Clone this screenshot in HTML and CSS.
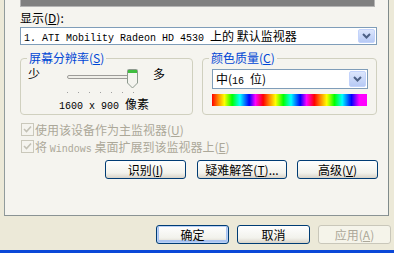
FILE: index.html
```html
<!DOCTYPE html>
<html>
<head>
<meta charset="utf-8">
<link rel="stylesheet" href="styles.css">
</head>
<body>
<div class="dialog">
  <div class="panel">
    <div class="preview"></div>
    <div class="label">显示(<u>D</u>):</div>
    <div class="select main-select">
      <span class="sel-text"><span class="mono">1. ATI Mobility Radeon HD 4530 </span>上的 默认监视器</span>
      <span class="dd"><svg width="9" height="6" viewBox="0 0 9 6"><path d="M1 1 L4.5 4.5 L8 1" fill="none" stroke="#4d6185" stroke-width="2"/></svg></span>
    </div>
    <div class="groups">
      <div class="group left-group">
        <span class="legend">屏幕分辨率(<u>S</u>)</span>
        <div class="slider-row">
          <span class="few">少</span>
          <div class="slider">
            <div class="track"></div>
            <div class="ticks"><i></i><i></i><i></i><i></i><i></i><i></i><i></i></div>
            <svg class="thumb" width="11" height="20" viewBox="0 0 11 20"><path d="M0.5 1.5 Q0.5 0.5 1.5 0.5 L9.5 0.5 Q10.5 0.5 10.5 1.5 L10.5 14 L5.5 19 L0.5 14 Z" fill="#f4f4ef" stroke="#8e9a8f"/><rect x="1" y="1" width="9" height="3" fill="#3fbd3f"/></svg>
          </div>
          <span class="many">多</span>
        </div>
        <div class="res"><span class="mono">1600 x 900 </span>像素</div>
      </div>
      <div class="group right-group">
        <span class="legend">颜色质量(<u>C</u>)</span>
        <div class="select color-select">
          <span class="sel-text">中(<span class="mono">16 </span>位)</span>
          <span class="dd"><svg width="9" height="6" viewBox="0 0 9 6"><path d="M1 1 L4.5 4.5 L8 1" fill="none" stroke="#4d6185" stroke-width="2"/></svg></span>
        </div>
        <div class="spectrum"></div>
      </div>
    </div>
    <div class="checks">
      <div class="check"><span class="box"><svg width="9" height="8" viewBox="0 0 9 8"><path d="M1 4 L3.5 6.5 L8 1.5" fill="none" stroke="#c3c1b5" stroke-width="1.6"/></svg></span><span>使用该设备作为主监视器(<u>U</u>)</span></div>
      <div class="check"><span class="box"><svg width="9" height="8" viewBox="0 0 9 8"><path d="M1 4 L3.5 6.5 L8 1.5" fill="none" stroke="#c3c1b5" stroke-width="1.6"/></svg></span><span>将 <span class="mono">Windows</span> 桌面扩展到该监视器上(<u>E</u>)</span></div>
    </div>
    <div class="btn-row">
      <button class="btn b1">识别(<u>I</u>)</button>
      <button class="btn b2">疑难解答(<u>T</u>)...</button>
      <button class="btn b3">高级(<u>V</u>)</button>
    </div>
  </div>
  <div class="footer">
    <button class="btn fbtn default">确定</button>
    <button class="btn fbtn">取消</button>
    <button class="btn fbtn disabled">应用(<u>A</u>)</button>
  </div>
  <div class="frame-bottom"></div>
</div>
</body>
</html>
```
FILE: styles.css
```css
* { box-sizing: border-box; }
html, body {
  margin: 0;
  padding: 0;
  width: 394px;
  height: 253px;
  overflow: hidden;
  background: #ece9d8;
  font-family: "Noto Sans CJK SC", "Liberation Mono", sans-serif;
  font-size: 12px;
  color: #000;
}
u { text-decoration: underline; text-underline-offset: 1px; }
.mono { font-family: "Liberation Mono", monospace; font-size: 10px; }
.dialog { width: 394px; height: 253px; display: flex; flex-direction: column; }
.panel {
  margin-left: 4px;
  width: 385px;
  height: 216px;
  flex: none;
  background: #f5f4ef;
  border: 1px solid #919b9c;
  border-top: none;
  border-right-color: #7f8a8b;
  border-bottom-color: #8a9394;
  padding: 0 0 0 15px;
  display: flex;
  flex-direction: column;
}
.preview {
  width: 355px;
  height: 7px;
  flex: none;
  background: #808080;
  border: 1px solid #b4b4b4;
  border-top: none;
}
.label { margin-top: 2px; height: 17px; line-height: 17px; }
.select {
  display: flex;
  align-items: center;
  background: #fff;
  border: 1px solid #7f9db9;
  padding: 1px;
}
.main-select { width: 357px; height: 18px; margin-top: 1px; }
.sel-text { flex: 1; padding-left: 2px; height: 14px; line-height: 14px; white-space: nowrap; }
.dd {
  width: 17px;
  height: 100%;
  flex: none;
  background: linear-gradient(#dce6fc, #b7caf5);
  border: 1px solid #c3d3fb;
  border-radius: 2px;
  display: flex;
  align-items: center;
  justify-content: center;
}
.groups { display: flex; gap: 9px; margin-top: 13px; }
.group {
  position: relative;
  height: 57px;
  border: 1px solid #d0d0bf;
  border-radius: 4px;
}
.left-group { width: 173px; }
.right-group { width: 175px; padding-left: 9px; }
.legend {
  position: absolute;
  left: 6px;
  top: -7px;
  padding: 0 2px;
  background: #f5f4ef;
  color: #0046d5;
  line-height: 12px;
  white-space: nowrap;
}
.slider-row { display: flex; align-items: flex-start; margin-top: 8px; height: 24px; }
.few { width: 46px; padding-left: 7px; line-height: 14px; }
.many { padding-left: 5px; line-height: 14px; }
.slider { position: relative; width: 81px; height: 24px; }
.track {
  position: absolute; left: 0; top: 8px; width: 68px; height: 4px;
  border: 1px solid #9d9c99; border-radius: 2px; background: #f0efe9;
}
.thumb { position: absolute; left: 60px; top: 2px; }
.ticks { position: absolute; left: 0; top: 25px; display: flex; gap: 10px; }
.ticks i { width: 1px; height: 1px; background: #a0a0a0; display: block; }
.res { margin-top: 6px; margin-left: 38px; line-height: 14px; white-space: nowrap; }
.color-select { width: 156px; height: 20px; margin-top: 10px; }
.color-select .sel-text { height: 16px; line-height: 16px; }
.spectrum {
  width: 155px; height: 12px; margin-top: 5px;
  background: linear-gradient(90deg,
    #f00 0%, #f80 4%, #ff0 8%, #0f0 13%, #0ff 18%, #00f 24%, #f0f 28%, #f00 33%,
    #f80 37%, #ff0 41%, #0f0 46%, #0ff 51%, #00f 57%, #f0f 61%, #f00 66%,
    #f80 70%, #ff0 74%, #0f0 79%, #0ff 84%, #00f 90%, #f0f 95%, #f0f 100%);
}
.checks { margin-top: 7px; display: flex; flex-direction: column; gap: 3px; }
.check {
  display: flex; align-items: center; color: #aca899; height: 14px; margin-left: 1px; white-space: nowrap;
}
.check .box {
  width: 13px; height: 13px; border: 1px solid #cac8bb; background: #f5f4ef;
  display: flex; align-items: center; justify-content: center; margin-right: 1px; flex: none;
}
.btn-row { display: flex; margin-top: 7px; margin-left: 85px; }
.btn {
  font-family: "Noto Sans CJK SC", sans-serif;
  font-size: 12px;
  height: 19px;
  padding: 0;
  background: linear-gradient(#fefefe, #f2f2ec 70%, #d8d3c8);
  border: 1px solid #003c74;
  border-radius: 3px;
  color: #000;
  line-height: 16px;
  white-space: nowrap;
}
.b1 { width: 81px; }
.b2 { width: 90px; margin-left: 11px; }
.b3 { width: 81px; margin-left: 10px; }
.footer { display: flex; justify-content: flex-end; gap: 8px; padding-right: 3px; margin-top: 9px; }
.fbtn { width: 73px; }
.fbtn.default { box-shadow: inset 0 0 0 1px #b9d1f7, inset 0 -1px 0 2px #a9c3f0; }
.fbtn.disabled { border-color: #c9c7ba; color: #aca899; background: #f5f4ea; }
.frame-bottom { margin-top: auto; height: 3px; background: #0a48d8; flex: none; }
```
